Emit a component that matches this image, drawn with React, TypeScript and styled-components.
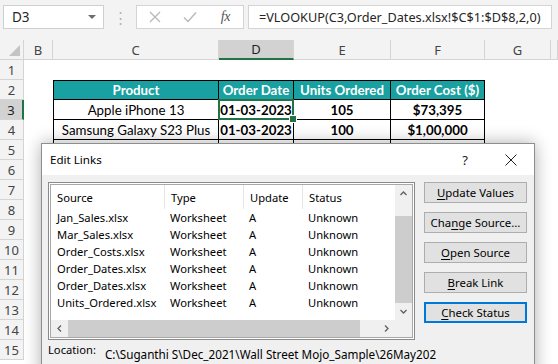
import React from 'react'
import styled, { createGlobalStyle } from 'styled-components'

const GlobalStyle = createGlobalStyle`
  html, body {
    margin: 0;
    padding: 0;
    background: #ffffff;
  }
  * {
    box-sizing: border-box;
  }
`

const Screen = styled.div`
  position: relative;
  width: 558px;
  height: 364px;
  overflow: hidden;
  background: #ffffff;
  font-family: 'Noto Sans', 'Open Sans', sans-serif;
`

/* ---------- formula bar ---------- */

const FormulaBar = styled.div`
  display: flex;
  align-items: flex-start;
  height: 40px;
  padding: 5px 6px 0 3px;
  background: #f3f3f3;
`

const NameBox = styled.div`
  display: flex;
  align-items: center;
  justify-content: space-between;
  width: 101px;
  height: 24px;
  padding: 0 7px 0 8px;
  background: #ffffff;
  border: 1px solid #cfcfcf;
  font-size: 13.5px;
  color: #262626;
`

const Caret = styled.span`
  width: 0;
  height: 0;
  border-left: 4px solid transparent;
  border-right: 4px solid transparent;
  border-top: 4px solid #6d6d6d;
`

const Grip = styled.div`
  display: flex;
  align-items: center;
  justify-content: center;
  width: 32px;
  height: 24px;
  color: #b4b4b4;
  font-size: 15px;
`

const FnBox = styled.div`
  display: flex;
  align-items: center;
  width: 108px;
  height: 24px;
  background: #ffffff;
  border: 1px solid #d4d4d4;
`

const FnSlot = styled.span<{ $dark?: boolean }>`
  display: flex;
  align-items: center;
  justify-content: center;
  width: 36px;
  height: 22px;
  color: ${({ $dark }) => ($dark ? '#555555' : '#b8b8b8')};
`

const FxText = styled.span`
  font-family: 'Liberation Serif', 'DejaVu Serif', serif;
  font-style: italic;
  font-size: 14px;
  letter-spacing: -0.5px;
`

const FormulaInput = styled.div`
  flex: 1;
  display: flex;
  align-items: center;
  height: 24px;
  margin-left: 4px;
  padding-left: 10px;
  background: #ffffff;
  border: 1px solid #d4d4d4;
  font-size: 12.7px;
  color: #262626;
  white-space: nowrap;
  overflow: hidden;
`

/* ---------- sheet ---------- */

const Sheet = styled.div`
  display: grid;
  grid-template-columns: 24px 29px 166px 75px 97px 94px 66px 1fr;
  grid-auto-rows: 20px;
  font-family: 'Lato', 'Open Sans', sans-serif;
`

const ColHead = styled.div<{ $active?: boolean }>`
  display: flex;
  align-items: center;
  justify-content: center;
  background: ${({ $active }) => ($active ? '#d2d2d2' : '#f3f3f3')};
  border-right: 1px solid #d4d4d4;
  border-bottom: ${({ $active }) => ($active ? '2px solid #217346' : '1px solid #d4d4d4')};
  font-family: 'Noto Sans', sans-serif;
  font-size: 13px;
  color: ${({ $active }) => ($active ? '#1f1f1f' : '#444444')};
`

const Corner = styled(ColHead)`
  position: relative;
  &::after {
    content: '';
    position: absolute;
    right: 3px;
    bottom: 3px;
    width: 0;
    height: 0;
    border-left: 11px solid transparent;
    border-bottom: 11px solid #c4c4c4;
  }
`

const RowHead = styled.div<{ $active?: boolean }>`
  display: flex;
  align-items: center;
  justify-content: center;
  background: ${({ $active }) => ($active ? '#d2d2d2' : '#f3f3f3')};
  border-bottom: 1px solid #d4d4d4;
  border-right: ${({ $active }) => ($active ? '2px solid #217346' : '1px solid #d4d4d4')};
  font-family: 'Noto Sans', sans-serif;
  font-size: 13px;
  color: ${({ $active }) => ($active ? '#1f1f1f' : '#444444')};
`

const Blank = styled.div``

const Cell = styled.div<{ $head?: boolean; $bold?: boolean; $first?: boolean; $top?: boolean; $selected?: boolean }>`
  position: relative;
  display: flex;
  align-items: center;
  justify-content: center;
  padding: 0 2px;
  white-space: nowrap;
  font-size: 13.3px;
  font-weight: ${({ $bold, $head }) => ($bold || $head ? 700 : 400)};
  color: ${({ $head }) => ($head ? '#ffffff' : '#000000')};
  background: ${({ $head }) => ($head ? '#19a0a0' : '#ffffff')};
  border-right: 1px solid #000000;
  border-bottom: 1px solid #000000;
  border-left: ${({ $first }) => ($first ? '1px solid #000000' : 'none')};
  border-top: ${({ $top }) => ($top ? '1px solid #000000' : 'none')};

  ${({ $selected }) =>
    $selected &&
    `
    &::after {
      content: '';
      position: absolute;
      left: -1px;
      top: -1px;
      right: -1px;
      bottom: -1px;
      border: 2px solid #217346;
    }
    &::before {
      content: '';
      position: absolute;
      right: -4px;
      bottom: -4px;
      width: 6px;
      height: 6px;
      background: #217346;
      border: 1px solid #ffffff;
      z-index: 1;
    }
  `}
`

/* ---------- dialog ---------- */

const Dialog = styled.div`
  position: absolute;
  left: 41px;
  top: 143px;
  width: 494px;
  height: 240px;
  display: flex;
  flex-direction: column;
  background: #f0f0f0;
  border: 1px solid #8e8e8e;
  box-shadow: 0 0 16px rgba(0, 0, 0, 0.32);
  font-family: 'Noto Sans', sans-serif;
  font-size: 11.2px;
  color: #000000;
`

const TitleBar = styled.div`
  display: flex;
  align-items: center;
  height: 31px;
  padding-left: 8px;
  background: #ffffff;
`

const Title = styled.div`
  flex: 1;
  font-size: 11.6px;
`

const TitleButton = styled.div`
  display: flex;
  align-items: center;
  justify-content: center;
  width: 46px;
  height: 31px;
  font-size: 13px;
  color: #222222;
`

const Body = styled.div`
  display: flex;
  flex-direction: column;
  padding: 7px 7px 0 6px;
`

const BodyRow = styled.div`
  display: flex;
  gap: 9px;
`

const ListFrame = styled.div`
  width: 367px;
  height: 158px;
  padding: 1px;
  background: #ffffff;
  border: 1px solid #8a8a8a;
`

const ListInner = styled.div`
  display: grid;
  grid-template-columns: 1fr 17px;
  grid-template-rows: 1fr 17px;
  height: 100%;
  border: 1px solid #a8a8a8;
  overflow: hidden;
`

const ListContent = styled.div`
  overflow: hidden;
  background: #ffffff;
`

const ListGrid = styled.div`
  display: grid;
  grid-template-columns: 113px 79px 59px 1fr;
  grid-template-rows: 24px;
  grid-auto-rows: 17px;
`

const HeadCell = styled.div<{ $sep?: boolean }>`
  display: flex;
  align-items: center;
  padding-left: 6px;
  border-left: ${({ $sep }) => ($sep ? '1px solid #e5e5e5' : 'none')};
  white-space: nowrap;
`

const ItemCell = styled.div`
  display: flex;
  align-items: center;
  padding-left: 6px;
  white-space: nowrap;
`

const VScroll = styled.div`
  display: flex;
  flex-direction: column;
  background: #f0f0f0;
`

const HScroll = styled.div`
  display: flex;
  background: #f0f0f0;
`

const ScrollArrow = styled.div`
  display: flex;
  align-items: center;
  justify-content: center;
  flex: 0 0 17px;
  width: 17px;
  height: 17px;
`

const Track = styled.div<{ $size: number }>`
  flex: 0 0 ${({ $size }) => $size}px;
`

const Thumb = styled.div`
  flex: 1;
  background: #cdcdcd;
`

const ScrollCorner = styled.div`
  background: #f0f0f0;
`

const ButtonCol = styled.div`
  display: flex;
  flex-direction: column;
  gap: 9px;
  width: 103px;
`

const DlgButton = styled.div<{ $focused?: boolean }>`
  display: flex;
  align-items: center;
  justify-content: center;
  height: 21px;
  font-size: 11.4px;
  background: #e1e1e1;
  border: ${({ $focused }) => ($focused ? '2px solid #0078d7' : '1px solid #adadad')};
  white-space: nowrap;

  u {
    text-decoration: underline;
    text-underline-offset: 2px;
  }
`

const LocationRow = styled.div`
  display: flex;
  gap: 9px;
  margin-top: 2px;
  white-space: nowrap;
`

const LocationPath = styled.div`
  padding-top: 4px;
  font-size: 11.7px;
`

function Chevron({ dir }: { dir: 'up' | 'down' | 'left' | 'right' }) {
  const rot = { up: 0, right: 90, down: 180, left: 270 }[dir]
  return (
    <svg width="9" height="9" viewBox="0 0 9 9" style={{ transform: `rotate(${rot}deg)` }}>
      <path d="M1.5 6 L4.5 3 L7.5 6" fill="none" stroke="#606060" strokeWidth="1.3" />
    </svg>
  )
}

const links = [
  ['Jan_Sales.xlsx', 'Worksheet', 'A', 'Unknown'],
  ['Mar_Sales.xlsx', 'Worksheet', 'A', 'Unknown'],
  ['Order_Costs.xlsx', 'Worksheet', 'A', 'Unknown'],
  ['Order_Dates.xlsx', 'Worksheet', 'A', 'Unknown'],
  ['Order_Dates.xlsx', 'Worksheet', 'A', 'Unknown'],
  ['Units_Ordered.xlsx', 'Worksheet', 'A', 'Unknown'],
]

const tableRows = [
  ['Apple iPhone 13', '01-03-2023', '105', '$73,395'],
  ['Samsung Galaxy S23 Plus', '01-03-2023', '100', '$1,00,000'],
  ['', '', '', ''],
  ['', '', '', ''],
  ['', '', '', ''],
  ['', '', '', ''],
]

const columns = ['B', 'C', 'D', 'E', 'F', 'G', '']

export default function App() {
  return (
    <Screen>
      <GlobalStyle />
      <FormulaBar>
        <NameBox>
          D3
          <Caret />
        </NameBox>
        <Grip>⋮</Grip>
        <FnBox>
          <FnSlot>
            <svg width="12" height="12" viewBox="0 0 12 12">
              <path d="M1 1 L11 11 M11 1 L1 11" stroke="#b8b8b8" strokeWidth="1.3" />
            </svg>
          </FnSlot>
          <FnSlot>
            <svg width="14" height="12" viewBox="0 0 14 12">
              <path d="M1 6.5 L5 10.5 L13 1.5" fill="none" stroke="#b8b8b8" strokeWidth="1.4" />
            </svg>
          </FnSlot>
          <FnSlot $dark>
            <FxText>fx</FxText>
          </FnSlot>
        </FnBox>
        <FormulaInput>=VLOOKUP(C3,Order_Dates.xlsx!$C$1:$D$8,2,0)</FormulaInput>
      </FormulaBar>

      <Sheet>
        <Corner />
        {columns.map((c, i) => (
          <ColHead key={i} $active={c === 'D'}>
            {c}
          </ColHead>
        ))}

        {Array.from({ length: 15 }, (_, i) => {
          const row = i + 1
          const cells: React.ReactNode[] = []
          if (row === 2) {
            ;['Product', 'Order Date', 'Units Ordered', 'Order Cost ($)'].forEach((t, j) =>
              cells.push(
                <Cell key={j} $head $top $first={j === 0}>
                  {t}
                </Cell>
              )
            )
          } else if (row >= 3 && row <= 8) {
            tableRows[row - 3].forEach((t, j) =>
              cells.push(
                <Cell key={j} $first={j === 0} $bold={j > 0} $selected={row === 3 && j === 1}>
                  {t}
                </Cell>
              )
            )
          } else {
            cells.push(<Blank key="c" />, <Blank key="d" />, <Blank key="e" />, <Blank key="f" />)
          }
          return (
            <React.Fragment key={row}>
              <RowHead $active={row === 3}>{row}</RowHead>
              <Blank />
              {cells}
              <Blank />
              <Blank />
            </React.Fragment>
          )
        })}
      </Sheet>

      <Dialog>
        <TitleBar>
          <Title>Edit Links</Title>
          <TitleButton>?</TitleButton>
          <TitleButton>
            <svg width="12" height="12" viewBox="0 0 12 12">
              <path d="M0.5 0.5 L11.5 11.5 M11.5 0.5 L0.5 11.5" stroke="#222" strokeWidth="1" />
            </svg>
          </TitleButton>
        </TitleBar>
        <Body>
          <BodyRow>
            <ListFrame>
              <ListInner>
                <ListContent>
                  <ListGrid>
                    <HeadCell>Source</HeadCell>
                    <HeadCell $sep>Type</HeadCell>
                    <HeadCell $sep>Update</HeadCell>
                    <HeadCell $sep>Status</HeadCell>
                    {links.map((l, i) =>
                      l.map((t, j) => <ItemCell key={`${i}-${j}`}>{t}</ItemCell>)
                    )}
                  </ListGrid>
                </ListContent>
                <VScroll>
                  <ScrollArrow>
                    <Chevron dir="up" />
                  </ScrollArrow>
                  <Track $size={14} />
                  <Thumb />
                  <ScrollArrow>
                    <Chevron dir="down" />
                  </ScrollArrow>
                </VScroll>
                <HScroll>
                  <ScrollArrow>
                    <Chevron dir="left" />
                  </ScrollArrow>
                  <Thumb />
                  <Track $size={18} />
                  <ScrollArrow>
                    <Chevron dir="right" />
                  </ScrollArrow>
                </HScroll>
                <ScrollCorner />
              </ListInner>
            </ListFrame>
            <ButtonCol>
              <DlgButton>
                <span>
                  <u>U</u>pdate Values
                </span>
              </DlgButton>
              <DlgButton>
                <span>
                  Cha<u>n</u>ge Source...
                </span>
              </DlgButton>
              <DlgButton>
                <span>
                  <u>O</u>pen Source
                </span>
              </DlgButton>
              <DlgButton>
                <span>
                  <u>B</u>reak Link
                </span>
              </DlgButton>
              <DlgButton $focused>
                <span>
                  <u>C</u>heck Status
                </span>
              </DlgButton>
            </ButtonCol>
          </BodyRow>
          <LocationRow>
            <div>Location:</div>
            <LocationPath>C:\Suganthi S\Dec_2021\Wall Street Mojo_Sample\26May202</LocationPath>
          </LocationRow>
        </Body>
      </Dialog>
    </Screen>
  )
}
